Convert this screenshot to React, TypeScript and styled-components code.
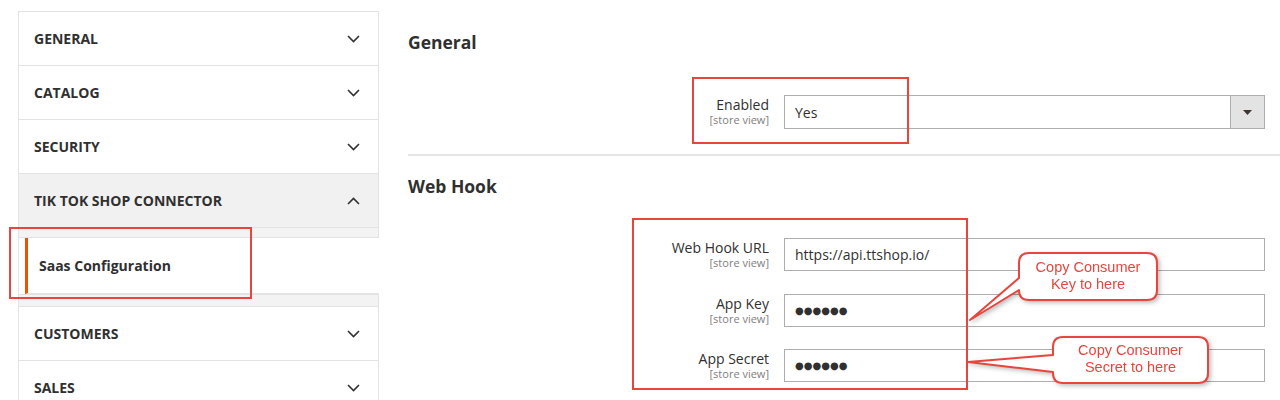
import React from "react";
import styled, { createGlobalStyle } from "styled-components";

const GlobalStyle = createGlobalStyle`
  body {
    margin: 0;
    background: #ffffff;
    font-family: "Open Sans", "Noto Sans", sans-serif;
    color: #303030;
  }
`;

type NavEntry = {
  title: string;
  open?: boolean;
};

const topGroup: NavEntry[] = [
  { title: "General" },
  { title: "Catalog" },
  { title: "Security" },
  { title: "Tik Tok Shop Connector", open: true },
];

const bottomGroup: NavEntry[] = [{ title: "Customers" }, { title: "Sales" }];

type Field = {
  label: string;
  value: string;
  secret?: boolean;
};

const hookFields: Field[] = [
  { label: "Web Hook URL", value: "https://api.ttshop.io/" },
  { label: "App Key", value: "●●●●●●", secret: true },
  { label: "App Secret", value: "●●●●●●", secret: true },
];

function calloutPath(
  x0: number,
  y0: number,
  x1: number,
  y1: number,
  r: number,
  ta: number,
  tb: number,
  tx: number,
  ty: number
) {
  return `M${x0} ${ta} L${tx} ${ty} L${x0} ${tb} L${x0} ${y1 - r} Q${x0} ${y1} ${x0 + r} ${y1} L${x1 - r} ${y1} Q${x1} ${y1} ${x1} ${y1 - r} L${x1} ${y0 + r} Q${x1} ${y0} ${x1 - r} ${y0} L${x0 + r} ${y0} Q${x0} ${y0} ${x0} ${y0 + r} Z`;
}

const Chevron = ({ up }: { up?: boolean }) => (
  <svg width="13" height="8" viewBox="0 0 13 8">
    <polyline
      points={up ? "1,7 6.5,1.5 12,7" : "1,1 6.5,6.5 12,1"}
      fill="none"
      stroke="#303030"
      strokeWidth="1.6"
    />
  </svg>
);

function App() {
  return (
    <Page>
      <GlobalStyle />
      <Sidebar>
        <Group>
          {topGroup.map((entry, idx) => (
            <NavTitle key={idx} $open={entry.open}>
              {entry.title}
              <Chevron up={entry.open} />
            </NavTitle>
          ))}
          <Band $h={9} />
        </Group>
        <SubItem>Saas Configuration</SubItem>
        <Group>
          <Band $h={11} />
          {bottomGroup.map((entry, idx) => (
            <NavTitle key={idx}>
              {entry.title}
              <Chevron />
            </NavTitle>
          ))}
        </Group>
      </Sidebar>

      <Main>
        <SectionTitle>General</SectionTitle>
        <FieldGrid $top={41}>
          <Label>
            Enabled
            <Scope>[store view]</Scope>
          </Label>
          <Select>
            <SelectValue>Yes</SelectValue>
            <SelectArrow>
              <svg width="9" height="5" viewBox="0 0 9 5">
                <polygon points="0,0 9,0 4.5,5" fill="#41362f" />
              </svg>
            </SelectArrow>
          </Select>
        </FieldGrid>
        <Divider />
        <SectionTitle $top={18}>Web Hook</SectionTitle>
        <FieldGrid $top={40}>
          {hookFields.map((field, idx) => (
            <React.Fragment key={idx}>
              <Label>
                {field.label}
                <Scope>[store view]</Scope>
              </Label>
              <TextInput readOnly value={field.value} $secret={field.secret} />
            </React.Fragment>
          ))}
        </FieldGrid>
      </Main>

      <Mark $x={9} $y={227} $w={243} $h={72} />
      <Mark $x={692} $y={77} $w={217} $h={67} />
      <Mark $x={632} $y={218} $w={336} $h={172} />

      <Callout $x={966} $y={250} $w={196} $h={75}>
        <svg width="196" height="75" viewBox="0 0 196 75">
          <path
            d={calloutPath(53, 3, 191, 50, 10, 28, 40, 4, 70)}
            fill="#ffffff"
            stroke="#e8453c"
            strokeWidth="2"
            strokeLinejoin="round"
          />
        </svg>
        <CalloutText $x={53} $y={2} $w={138} $h={47}>
          Copy Consumer
          <br />
          Key to here
        </CalloutText>
      </Callout>

      <Callout $x={964} $y={334} $w={250} $h={54}>
        <svg width="250" height="54" viewBox="0 0 250 54">
          <path
            d={calloutPath(89, 3, 244, 49, 10, 21, 38, 4, 28)}
            fill="#ffffff"
            stroke="#e8453c"
            strokeWidth="2"
            strokeLinejoin="round"
          />
        </svg>
        <CalloutText $x={89} $y={2} $w={155} $h={46}>
          Copy Consumer
          <br />
          Secret to here
        </CalloutText>
      </Callout>
    </Page>
  );
}

const Page = styled.div`
  position: relative;
  display: flex;
  align-items: flex-start;
  gap: 29px;
  height: 400px;
  padding-left: 18px;
  overflow: hidden;
  box-sizing: border-box;
`;

const Sidebar = styled.nav`
  flex: 0 0 361px;
  width: 361px;
  margin-top: 11px;
  border-left: 1px solid #e3e3e3;
  box-sizing: border-box;
`;

const Group = styled.div`
  border-top: 1px solid #e3e3e3;
  border-right: 1px solid #e3e3e3;
`;

const NavTitle = styled.div<{ $open?: boolean }>`
  display: flex;
  align-items: center;
  justify-content: space-between;
  height: 53px;
  padding: 0 18px 0 15px;
  border-bottom: 1px solid #e3e3e3;
  background: ${(props) => (props.$open ? "#f1f1f1" : "#ffffff")};
  font-size: 14px;
  font-weight: 700;
  text-transform: uppercase;
  color: #303030;
`;

const Band = styled.div<{ $h: number }>`
  height: ${(props) => props.$h}px;
  background: #f3f3f3;
  border-bottom: 1px solid #e3e3e3;
`;

const SubItem = styled.div`
  display: flex;
  align-items: center;
  height: 55px;
  margin-left: 6px;
  padding-left: 11px;
  border-left: 3px solid #eb5202;
  border-bottom: 1px solid #e3e3e3;
  font-size: 14px;
  font-weight: 700;
  color: #303030;
`;

const Main = styled.main`
  flex: 1;
  padding-top: 30px;
`;

const SectionTitle = styled.h2<{ $top?: number }>`
  margin: ${(props) => props.$top ?? 0}px 0 0;
  font-size: 17.5px;
  line-height: 24px;
  font-weight: 700;
  color: #303030;
`;

const FieldGrid = styled.div<{ $top: number }>`
  display: grid;
  grid-template-columns: 361px 481px;
  column-gap: 15px;
  row-gap: 22.5px;
  margin-top: ${(props) => props.$top}px;
`;

const Label = styled.div`
  display: flex;
  flex-direction: column;
  align-items: flex-end;
  padding-top: 2px;
  font-size: 14px;
  line-height: 16px;
  color: #303030;
`;

const Scope = styled.span`
  font-size: 11px;
  line-height: 13.5px;
  color: #808080;
`;

const Select = styled.div`
  display: flex;
  height: 34px;
  border: 1px solid #adadad;
  box-sizing: border-box;
  background: #ffffff;
`;

const SelectValue = styled.div`
  flex: 1;
  display: flex;
  align-items: center;
  padding-left: 10px;
  font-size: 14px;
  color: #303030;
`;

const SelectArrow = styled.div`
  display: flex;
  align-items: center;
  justify-content: center;
  width: 33px;
  background: #e3e3e3;
  border-left: 1px solid #adadad;
`;

const TextInput = styled.input<{ $secret?: boolean }>`
  height: 33px;
  margin: 0;
  padding: 0 10px;
  border: 1px solid #adadad;
  border-radius: 0;
  box-sizing: border-box;
  outline: none;
  background: #ffffff;
  font-family: ${(props) =>
    props.$secret ? '"DejaVu Sans", sans-serif' : '"Open Sans", sans-serif'};
  font-size: ${(props) => (props.$secret ? "10px" : "14px")};
  color: #303030;
`;

const Divider = styled.hr`
  margin: 25px 0 0;
  height: 2px;
  border: none;
  background: #e5e5e5;
`;

const Mark = styled.div<{ $x: number; $y: number; $w: number; $h: number }>`
  position: absolute;
  left: ${(props) => props.$x}px;
  top: ${(props) => props.$y}px;
  width: ${(props) => props.$w}px;
  height: ${(props) => props.$h}px;
  border: 2px solid #e8453c;
  box-sizing: border-box;
  pointer-events: none;
`;

const Callout = styled.div<{ $x: number; $y: number; $w: number; $h: number }>`
  position: absolute;
  left: ${(props) => props.$x}px;
  top: ${(props) => props.$y}px;
  width: ${(props) => props.$w}px;
  height: ${(props) => props.$h}px;
  filter: drop-shadow(2px 2px 2px rgba(0, 0, 0, 0.25));

  svg {
    display: block;
  }
`;

const CalloutText = styled.div<{ $x: number; $y: number; $w: number; $h: number }>`
  position: absolute;
  left: ${(props) => props.$x}px;
  top: ${(props) => props.$y}px;
  width: ${(props) => props.$w}px;
  height: ${(props) => props.$h}px;
  display: flex;
  align-items: center;
  justify-content: center;
  text-align: center;
  font-family: "Liberation Sans", Arial, sans-serif;
  font-size: 14.5px;
  line-height: 17px;
  color: #e8453c;
`;

export default App;
